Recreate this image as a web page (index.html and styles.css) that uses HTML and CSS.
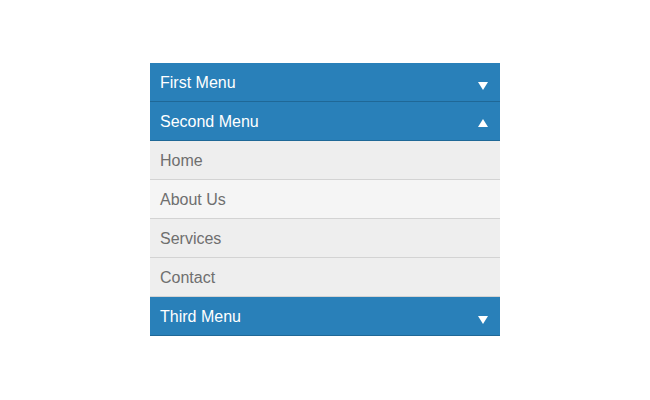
FILE: index.html
```html
<!DOCTYPE html>
<html>
<head>
<meta charset="utf-8">
<link rel="stylesheet" href="styles.css">
</head>
<body>
<div class="accordion">
  <div class="head"><span>First Menu</span><span class="arrow down"></span></div>
  <div class="head"><span>Second Menu</span><span class="arrow up"></span></div>
  <ul class="sub">
    <li class="item">Home</li>
    <li class="item alt">About Us</li>
    <li class="item">Services</li>
    <li class="item">Contact</li>
  </ul>
  <div class="head"><span>Third Menu</span><span class="arrow down"></span></div>
</div>
</body>
</html>
```
FILE: styles.css
```css
html, body { margin: 0; padding: 0; background: #fff; }
body { padding-top: 63px; font-family: "Liberation Sans", Arial, sans-serif; }
.accordion { width: 350px; margin-left: 150px; }
.head {
  height: 37px;
  padding: 1px 12px 0 10px;
  background: #2980b9;
  border-bottom: 1px solid #1f6897;
  color: #fff;
  font-size: 16px;
  display: flex;
  align-items: center;
  justify-content: space-between;
  box-sizing: content-box;
}
.arrow { width: 0; height: 0; border-left: 5px solid transparent; border-right: 5px solid transparent; }
.arrow.down { border-top: 8px solid #fff; margin-top: 6px; }
.arrow.up { border-bottom: 8px solid #fff; margin-top: 3px; }
.sub { list-style: none; margin: 0; padding: 0; }
.item {
  height: 37px;
  line-height: 37px;
  padding: 1px 0 0 10px;
  background: #eeeeee;
  border-bottom: 1px solid #d3d3d3;
  color: #6f6f6f;
  font-size: 16px;
}
.item.alt { background: #f5f5f5; }
```
